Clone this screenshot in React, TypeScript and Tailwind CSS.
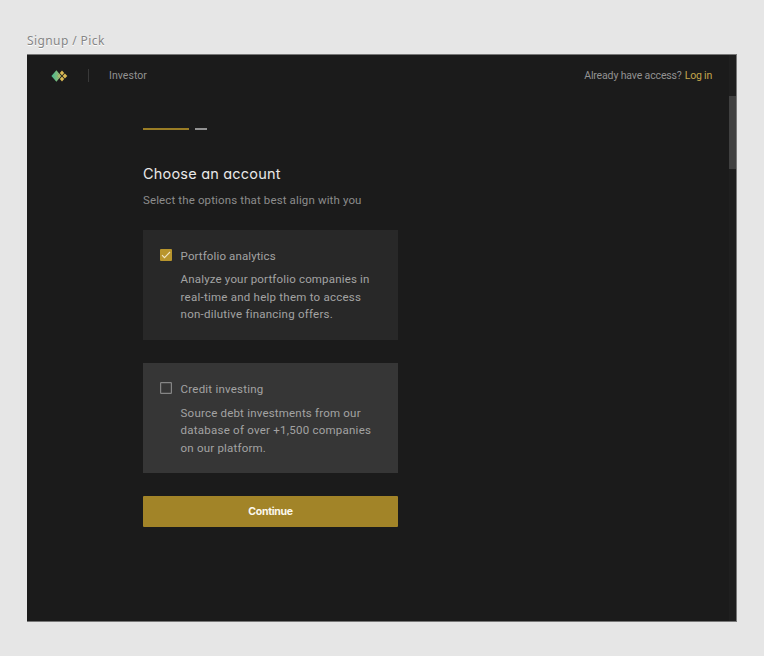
import React, { useState } from "react";

type Option = { title: string; lines: { text: string; tracking: string }[]; titleTracking: string; bodyOffset: string };

const options: Option[] = [
  {
    title: "Portfolio analytics",
    titleTracking: "tracking-[0.12px]",
    bodyOffset: "mt-[6.4px]",
    lines: [
      { text: "Analyze your portfolio companies in", tracking: "tracking-[0.17px]" },
      { text: "real-time and help them to access", tracking: "tracking-[0.24px]" },
      { text: "non-dilutive financing offers.", tracking: "tracking-[0.23px]" },
    ],
  },
  {
    title: "Credit investing",
    titleTracking: "tracking-[0.22px]",
    bodyOffset: "mt-[6.8px]",
    lines: [
      { text: "Source debt investments from our", tracking: "tracking-[0.2px]" },
      { text: "database of over +1,500 companies", tracking: "tracking-[0.24px]" },
      { text: "on our platform.", tracking: "tracking-[0.2px]" },
    ],
  },
];

function Logo() {
  return (
    <svg width="17" height="12" viewBox="0 0 17 12" className="block">
      <defs>
        <linearGradient id="leaf" x1="0" x2="1">
          <stop offset="0" stopColor="#43b78d" />
          <stop offset="1" stopColor="#91bd79" />
        </linearGradient>
      </defs>
      <path d="M5.4 .3 8.3 3.7 6.4 6 8.3 8.3 5.4 11.7 .4 6Z" fill="url(#leaf)" />
      <path d="M8.2 3.6 10.3 6 8.2 8.4 6 6Z" fill="#a8bd70" />
      <g fill="#d9b853">
        <path d="M11 .4 13.2 2.9 11 5.4 8.8 2.9Z" />
        <path d="M13.9 3.5 16.3 6 13.9 8.5 11.6 6Z" />
        <path d="M11 6.6 13.2 9.1 11 11.6 8.8 9.1Z" />
      </g>
    </svg>
  );
}

function Checkbox({ checked }: { checked: boolean }) {
  return checked ? (
    <svg width="12" height="12" viewBox="0 0 12 12" className="block">
      <rect width="12" height="12" rx="1" fill="#b8952d" />
      <path d="m2 6.1 2.5 2.6L10 3" fill="none" stroke="#f1e6c4" strokeWidth="1.1" />
    </svg>
  ) : (
    <svg width="12" height="12" viewBox="0 0 12 12" className="block">
      <rect x=".6" y=".6" width="10.8" height="10.8" rx=".6" fill="none" stroke="#858585" strokeWidth="1.2" />
    </svg>
  );
}

function OptionCard({ option, checked, onToggle }: { option: Option; checked: boolean; onToggle: () => void }) {
  return (
    <button
      type="button"
      role="checkbox"
      aria-checked={checked}
      onClick={onToggle}
      className={`flex h-[110px] w-[255px] items-start gap-[8px] pl-[17px] text-left text-[11.5px] text-[#a3a3a3] ${
        checked ? "bg-[#282828]" : "bg-[#363636]"
      }`}
    >
      <span className="mt-[19px] block w-[12.6px]">
        <Checkbox checked={checked} />
      </span>
      <span className="block whitespace-nowrap pt-[18px]">
        <span className={`block leading-[17px] ${option.titleTracking}`}>{option.title}</span>
        <span className={`block leading-[17.4px] ${option.bodyOffset}`}>
          {option.lines.map((line) => (
            <span key={line.text} className={`block ${line.tracking}`}>
              {line.text}
            </span>
          ))}
        </span>
      </span>
    </button>
  );
}

export default function App() {
  const [selected, setSelected] = useState([true, false]);
  return (
    <div className="h-[656px] w-[764px] overflow-hidden bg-[#e6e6e6] pl-[27px] pt-[32px] font-[Roboto,sans-serif]">
      <div className="h-[22px] whitespace-nowrap font-['Noto_Sans',sans-serif] text-[12px] leading-[17px] tracking-[0.4px] text-[#858585] [text-shadow:0_1px_0_white]">
        Signup / Pick
      </div>
      <div className="flex h-[568px] w-[710px] border-t border-r border-b border-[#777777] bg-[#1b1b1b]">
        <div className="w-[702px]">
          <header className="flex h-[41px] items-center pl-[24px] text-[10.5px] text-[#929292]">
            <Logo />
            <span className="ml-[20px] h-[13px] w-px bg-[#393939]" />
            <span className="ml-[20px] whitespace-nowrap tracking-[0.05px]">Investor</span>
            <span className="ml-auto mr-[17px] flex gap-[3px] whitespace-nowrap">
              <span className="tracking-[-0.14px]">Already have access?</span>
              <a className="tracking-[-0.2px] text-[#c3a54c]">Log in</a>
            </span>
          </header>
          <main className="ml-[116px] w-[255px] pt-[32px]">
            <div className="flex gap-[6px]">
              <span className="h-[2px] w-[46px] bg-[#9a7d25]" />
              <span className="h-[2px] w-[12px] bg-[#929292]" />
            </div>
            <h1 className="mt-[34px] whitespace-nowrap font-[Inter,sans-serif] text-[14.5px] leading-[20px] tracking-[0.2px] text-[#e8e8e8] [font-feature-settings:'cv11']">
              Choose an account
            </h1>
            <p className="mt-[8px] h-[16px] whitespace-nowrap text-[11.5px] leading-[16px] tracking-[0.13px] text-[#8c8c8c]">
              Select the options that best align with you
            </p>
            <div className="mt-[22px] flex flex-col gap-[23px]">
              {options.map((option, i) => (
                <OptionCard
                  key={option.title}
                  option={option}
                  checked={selected[i]}
                  onToggle={() => setSelected(selected.map((v, j) => (j === i ? !v : v)))}
                />
              ))}
              <button
                type="button"
                className="flex h-[31px] items-center justify-center rounded-[1px] bg-[#a28428] font-[Inter,sans-serif] text-[10.5px] font-bold tracking-[-0.3px] text-[#fbf8ed] [font-feature-settings:'cv11']"
              >
                Continue
              </button>
            </div>
          </main>
        </div>
        <div className="w-[7px] bg-[#1f1f1f] pt-[41px]">
          <div className="h-[73px] bg-[#404040]" />
        </div>
      </div>
    </div>
  );
}
